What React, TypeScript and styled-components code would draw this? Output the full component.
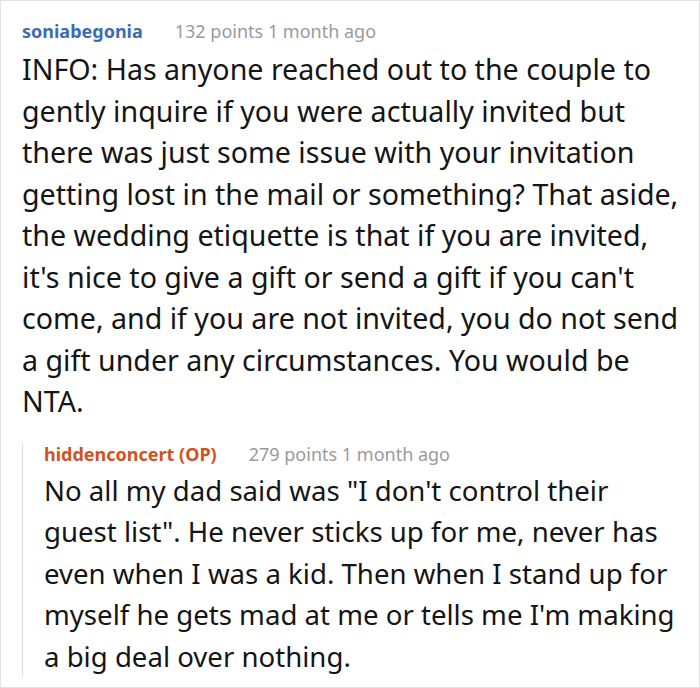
import React from "react";
import styled, { createGlobalStyle } from "styled-components";

const GlobalStyle = createGlobalStyle`
  body {
    margin: 0;
    background: #fff;
    font-family: "Noto Sans", "Open Sans", sans-serif;
  }
`;

const Thread = styled.div`
  box-sizing: border-box;
  width: 700px;
  height: 688px;
  border: 1px solid #e2e2e2;
  padding: 19px 16px 0 21px;
  overflow: hidden;
`;

const Meta = styled.div`
  display: flex;
  align-items: center;
  gap: 32px;
  font-size: 18px;
  line-height: 22px;
`;

const Author = styled.span<{ $op?: boolean }>`
  font-weight: 700;
  color: ${(p) => (p.$op ? "#d2521f" : "#3c6cb4")};
`;

const Info = styled.span`
  color: #9a9a9a;
`;

const Body = styled.p<{ $reply?: boolean }>`
  margin: ${(p) => (p.$reply ? "5px 0 0" : "6px 0 0")};
  font-size: ${(p) => (p.$reply ? "27.6px" : "28.6px")};
  line-height: 41.5px;
  color: #151515;
`;

const Reply = styled.div`
  margin-top: 21px;
  border-left: 1px solid #dcdcdc;
  padding-left: 21px;
`;

type CommentProps = {
  author: string;
  op?: boolean;
  points: number;
  age: string;
  text: string;
  reply?: boolean;
};

const Comment = ({ author, op, points, age, text, reply }: CommentProps) => (
  <>
    <Meta>
      <Author $op={op}>{author}</Author>
      <Info>
        {points} points {age}
      </Info>
    </Meta>
    <Body $reply={reply}>{text}</Body>
  </>
);

export default function App() {
  return (
    <>
      <GlobalStyle />
      <Thread>
        <Comment
          author="soniabegonia"
          points={132}
          age="1 month ago"
          text="INFO: Has anyone reached out to the couple to gently inquire if you were actually invited but there was just some issue with your invitation getting lost in the mail or something? That aside, the wedding etiquette is that if you are invited, it's nice to give a gift or send a gift if you can't come, and if you are not invited, you do not send a gift under any circumstances. You would be NTA."
        />
        <Reply>
          <Comment
            author="hiddenconcert (OP)"
            op
            reply
            points={279}
            age="1 month ago"
            text={`No all my dad said was "I don't control their guest list". He never sticks up for me, never has even when I was a kid. Then when I stand up for myself he gets mad at me or tells me I'm making a big deal over nothing.`}
          />
        </Reply>
      </Thread>
    </>
  );
}
